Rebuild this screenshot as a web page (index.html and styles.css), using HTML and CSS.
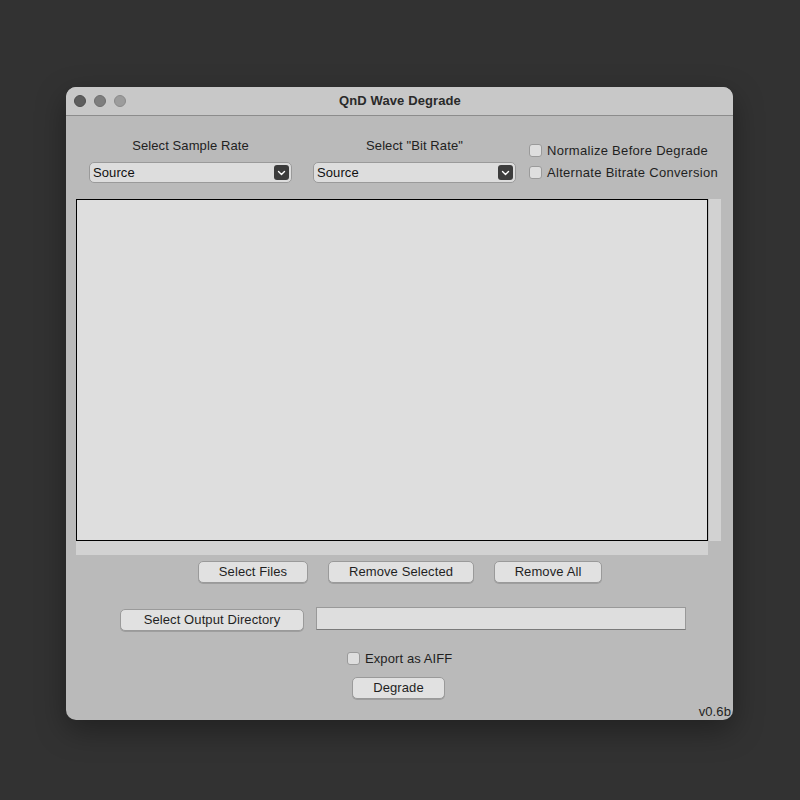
FILE: index.html
```html
<!DOCTYPE html>
<html>
<head>
<meta charset="utf-8">
<link rel="stylesheet" href="styles.css">
</head>
<body>
<div class="window">
  <div class="titlebar">
    <div class="lights">
      <span class="light l1"></span><span class="light l2"></span><span class="light l3"></span>
    </div>
    <div class="title">QnD Wave Degrade</div>
  </div>
  <div class="content">
    <div class="top-row">
      <div class="col">
        <div class="label">Select Sample Rate</div>
        <div class="select"><span>Source</span><span class="arrow"><svg width="9" height="6" viewBox="0 0 9 6"><path d="M1.5 1.5 L4.5 4.5 L7.5 1.5" fill="none" stroke="#fff" stroke-width="1.4" stroke-linecap="round" stroke-linejoin="round"/></svg></span></div>
      </div>
      <div class="col">
        <div class="label">Select "Bit Rate"</div>
        <div class="select"><span>Source</span><span class="arrow"><svg width="9" height="6" viewBox="0 0 9 6"><path d="M1.5 1.5 L4.5 4.5 L7.5 1.5" fill="none" stroke="#fff" stroke-width="1.4" stroke-linecap="round" stroke-linejoin="round"/></svg></span></div>
      </div>
      <div class="checks">
        <div class="check"><span class="box"></span><span class="wide">Normalize Before Degrade</span></div>
        <div class="check"><span class="box"></span><span class="wide">Alternate Bitrate Conversion</span></div>
      </div>
    </div>
    <div class="list-area">
      <div class="list"></div>
      <div class="vscroll"></div>
      <div class="hscroll"></div>
    </div>
    <div class="btn-row">
      <div class="btn w-files">Select Files</div>
      <div class="btn w-remsel">Remove Selected</div>
      <div class="btn w-remall">Remove All</div>
    </div>
    <div class="out-row">
      <div class="btn w-out">Select Output Directory</div>
      <div class="field"></div>
    </div>
    <div class="export-row">
      <div class="check"><span class="box"></span><span>Export as AIFF</span></div>
    </div>
    <div class="degrade-row">
      <div class="btn w-degrade">Degrade</div>
    </div>
    <div class="version">v0.6b</div>
  </div>
</div>
</body>
</html>
```
FILE: styles.css
```css
html, body {
  margin: 0;
  padding: 0;
  background: #323232;
  width: 800px;
  height: 800px;
  overflow: hidden;
}
body {
  font-family: "Liberation Sans", Arial, sans-serif;
  font-size: 13px;
  color: #1f1f1f;
  letter-spacing: 0.1px;
}
.window {
  margin-left: 66px;
  margin-top: 87px;
  width: 667px;
  height: 633px;
  border-radius: 10px;
  overflow: hidden;
  background: #bababa;
  box-shadow: 0 10px 30px rgba(0,0,0,0.35);
  display: flex;
  flex-direction: column;
}
.titlebar {
  height: 28px;
  background: #c8c8c8;
  border-bottom: 1px solid #8c8c8c;
  position: relative;
  display: flex;
  align-items: center;
  justify-content: center;
  flex: none;
}
.lights {
  position: absolute;
  left: 8px;
  top: 8px;
  display: flex;
  gap: 8px;
}
.light {
  width: 12px;
  height: 12px;
  border-radius: 50%;
  box-sizing: border-box;
}
.l1 { background: #5e5e5e; border: 1px solid #4f4f4f; }
.l2 { background: #7e7e7e; border: 1px solid #6e6e6e; }
.l3 { background: #9c9c9c; border: 1px solid #8a8a8a; }
.title {
  font-weight: bold;
  font-size: 13px;
  color: #2a2a2a;
  margin-left: 1px;
  padding-bottom: 2px;
}
.content {
  flex: 1;
  display: flex;
  flex-direction: column;
  position: relative;
}
.top-row {
  display: flex;
  margin-top: 22px;
  padding-left: 23px;
  height: 45px;
}
.col {
  width: 203px;
  display: flex;
  flex-direction: column;
  align-items: center;
}
.col + .col { margin-left: 21px; }
.label {
  height: 16px;
  line-height: 16px;
  margin-bottom: 8px;
  color: #222;
}
.select {
  width: 203px;
  height: 21px;
  box-sizing: border-box;
  background: #dddddd;
  border: 1px solid #9a9a9a;
  border-radius: 5px;
  display: flex;
  align-items: center;
  justify-content: space-between;
  padding-left: 3px;
  padding-right: 2px;
  color: #111;
}
.arrow {
  width: 15px;
  height: 15px;
  background: #3c3c3c;
  border-radius: 3px;
  display: flex;
  align-items: center;
  justify-content: center;
}
.checks {
  margin-left: 13px;
  display: flex;
  flex-direction: column;
  margin-top: 1px;
}
.check {
  display: flex;
  align-items: center;
  height: 22px;
  color: #1f1f1f;
}
.wide { letter-spacing: 0.3px; }
.box {
  width: 13px;
  height: 13px;
  box-sizing: border-box;
  border: 1px solid #9a9a9a;
  border-radius: 3px;
  background: #dedede;
  margin-right: 5px;
}
.list-area {
  margin-top: 16px;
  margin-left: 10px;
  display: grid;
  grid-template-columns: 632px 1px 12px;
  grid-template-rows: 342px 14px;
}
.list {
  grid-column: 1;
  grid-row: 1;
  background: #dedede;
  border: 1px solid #000;
}
.vscroll {
  grid-column: 3;
  grid-row: 1;
  background: #d2d2d2;
}
.hscroll {
  grid-column: 1;
  grid-row: 2;
  background: #d2d2d2;
}
.btn-row {
  display: flex;
  justify-content: center;
  gap: 20px;
  margin-top: 6px;
  padding-left: 1px;
}
.btn {
  height: 22px;
  box-sizing: border-box;
  background: #e1e1e1;
  border: 1px solid #9a9a9a;
  border-radius: 5px;
  box-shadow: 0 1px 0 rgba(0,0,0,0.15);
  display: flex;
  align-items: center;
  justify-content: center;
  color: #1f1f1f;
  padding-bottom: 2px;
}
.w-files { width: 110px; }
.w-remsel { width: 146px; }
.w-remall { width: 108px; }
.out-row {
  display: flex;
  align-items: flex-start;
  margin-top: 24px;
  padding-left: 54px;
}
.w-out { width: 184px; margin-top: 2px; }
.field {
  margin-left: 12px;
  width: 370px;
  height: 23px;
  box-sizing: border-box;
  background: #dedede;
  border: 1px solid #999;
  border-bottom-color: #7a7a7a;
}
.export-row {
  display: flex;
  justify-content: flex-start;
  padding-left: 281px;
  margin-top: 16px;
}
.degrade-row {
  display: flex;
  padding-left: 286px;
  margin-top: 8px;
}
.w-degrade { width: 93px; }
.version {
  position: absolute;
  right: 2px;
  bottom: 1px;
  color: #1f1f1f;
}
```
